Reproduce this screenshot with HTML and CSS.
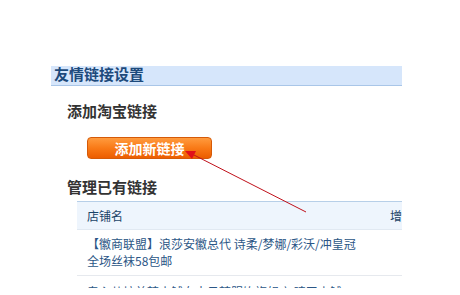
FILE: index.html
```html
<!DOCTYPE html>
<html lang="zh">
<head>
<meta charset="utf-8">
<link rel="stylesheet" href="styles.css">
</head>
<body>
<div class="viewport">
  <div class="page">
    <div class="hd">友情链接设置</div>
    <h3 class="sub">添加淘宝链接</h3>
    <div class="btn-wrap"><a class="btn">添加新链接</a></div>
    <h3 class="sub sub2">管理已有链接</h3>
    <div class="tbl">
      <div class="row head">
        <div class="c1">店铺名</div>
        <div class="c2">增加时间</div>
      </div>
      <div class="row">
        <div class="c1 link">【徽商联盟】浪莎安徽总代 诗柔/梦娜/彩沃/冲皇冠<br>全场丝袜58包邮</div>
        <div class="c2"></div>
      </div>
      <div class="row row2">
        <div class="c1 link">专心儿坊美韩小铺女士日韩服饰旗舰店 晴天小铺</div>
        <div class="c2"></div>
      </div>
    </div>
  </div>
  <svg class="arrow" width="460" height="295" viewBox="0 0 460 295">
    <line x1="306" y1="212" x2="192" y2="154" stroke="#c0101a" stroke-width="1"/>
    <polygon points="185,151 196,151 192,159" fill="#e0101a"/>
  </svg>
</div>
</body>
</html>
```

FILE: styles.css
```css
html, body {
  margin: 0;
  padding: 0;
  background: #fff;
}
.viewport {
  position: relative;
  width: 460px;
  height: 288px;
  overflow: hidden;
  font-family: "Noto Sans CJK SC", "DejaVu Sans", sans-serif;
}
.page {
  margin-left: 51px;
  width: 351px;
  padding-top: 66px;
  overflow: hidden;
}
.hd {
  height: 19px;
  line-height: 15px;
  background: #d6e6fb;
  border-bottom: 1px solid #a9c6e8;
  color: #1d4a7c;
  font-size: 15px;
  font-weight: bold;
  padding-left: 3px;
  white-space: nowrap;
}
.sub {
  margin: 15px 0 0 16px;
  font-size: 15px;
  line-height: 20px;
  font-weight: bold;
  color: #333;
}
.sub2 {
  margin-top: 18px;
}
.btn-wrap {
  margin: 16px 0 0 36px;
}
.btn {
  display: block;
  box-sizing: border-box;
  width: 125px;
  height: 22px;
  line-height: 20px;
  text-align: center;
  color: #fff;
  font-size: 14px;
  font-weight: bold;
  border: 1px solid #d55a08;
  border-radius: 4px;
  background: linear-gradient(#ff9b3e, #f97a17 50%, #ec5d00);
}
.tbl {
  margin: 4px 0 0 26px;
  width: 380px;
}
.row {
  display: grid;
  grid-template-columns: 303px 77px;
  border-bottom: 1px solid #e6e9ee;
  font-size: 12px;
  line-height: 17px;
}
.row .c1, .row .c2 {
  padding-left: 10px;
}
.head {
  background: #eef5fd;
  border-top: 1px solid #b7cfe8;
  border-bottom: 1px solid #e1e9f2;
  height: 27px;
  line-height: 27px;
  color: #1b4468;
}
.row:not(.head) {
  padding: 5px 0 6px;
}
.row2:not(.head) {
  padding-top: 7px;
}
.link {
  color: #2b5686;
  white-space: nowrap;
}
.arrow {
  position: absolute;
  left: 0;
  top: 0;
  pointer-events: none;
}
```
